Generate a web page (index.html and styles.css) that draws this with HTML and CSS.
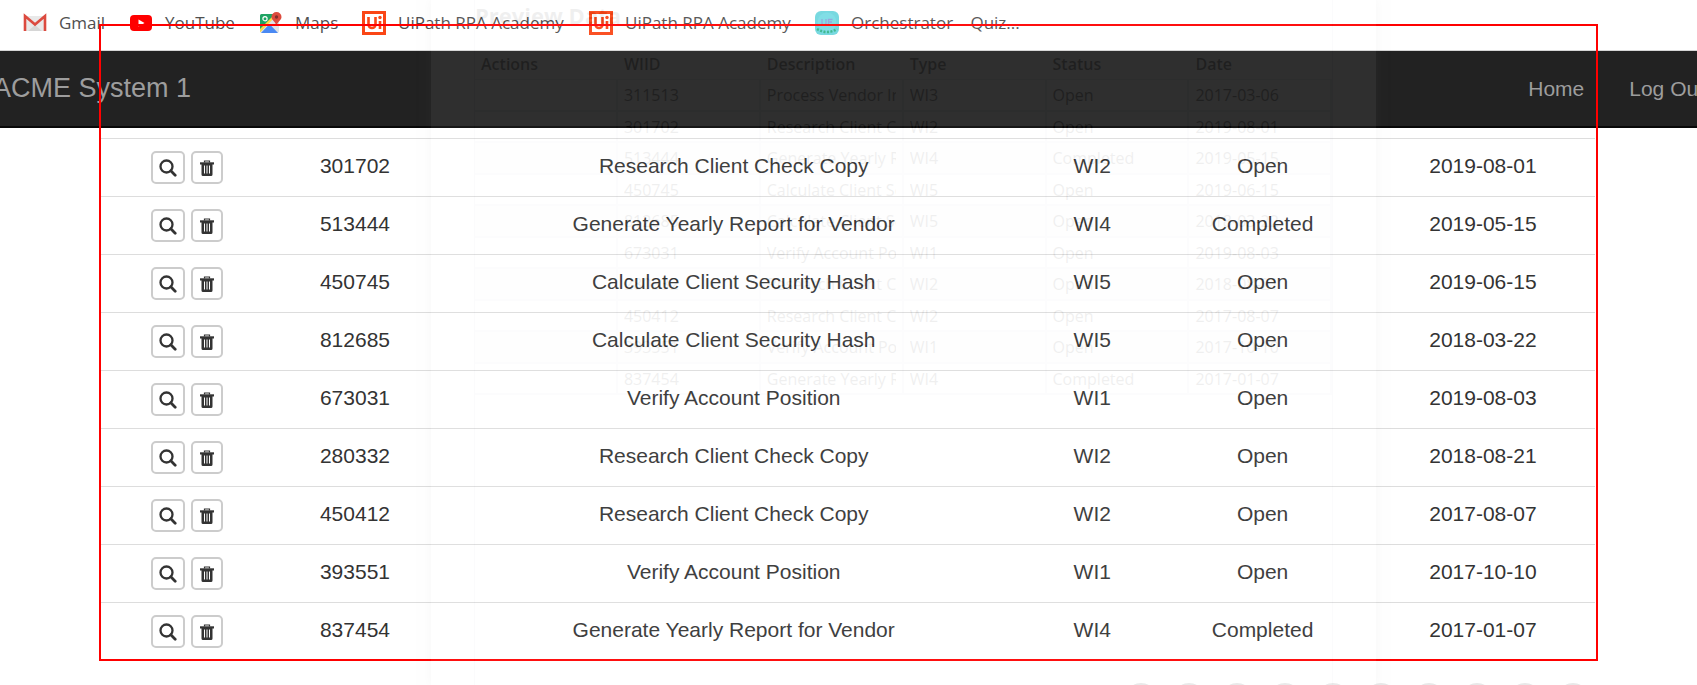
FILE: index.html
```html
<!DOCTYPE html>
<html lang="en">
<head>
<meta charset="utf-8">
<title>ACME System 1 - Work Items</title>
<link rel="stylesheet" href="styles.css">
</head>
<body>
<svg class="defs" aria-hidden="true">
  <symbol id="search" viewBox="0 0 18 18"><circle cx="7.5" cy="7.5" r="6" fill="none" stroke="currentColor" stroke-width="2.3"/><path d="M11.8 11.8 16.2 16.2" stroke="currentColor" stroke-width="2.8" stroke-linecap="round"/></symbol>
  <symbol id="trash" viewBox="0 0 14 16"><path d="M4.500 2.500V1h5v1.500" fill="none" stroke="currentColor" stroke-width="1.200"/><path d="M0 2.300h14V4.500H0z" fill="currentColor"/><path d="M1.500 4h11v10.500a1.500 1.500 0 0 1-1.500 1.500H3a1.500 1.500 0 0 1-1.500-1.500z" fill="currentColor"/><path d="M4.500 5.500v8M7 5.500v8M9.500 5.500v8" stroke="#fff" stroke-width="1"/></symbol>
  <symbol id="uipath" viewBox="0 0 24 24"><path d="M1.500 1.500h21v21h-21z" fill="#fff" stroke="#fa4616" stroke-width="3"/><path d="M6.500 6v7.500a3.500 3.500 0 0 0 7 0V6M18 10v8" fill="none" stroke="#fa4616" stroke-width="2.600"/><circle cx="18" cy="6.500" r="1.700" fill="#fa4616"/></symbol>
</svg>

<nav class="bookmarks" aria-label="Bookmarks">
  <a href="#"><svg class="mark" viewBox="0 0 24 24"><path d="M2 5h20v15H2z" fill="#e9e9e9"/><path d="M5 20l7-6 7 6z" fill="#d6d6d6"/><path d="M2 20V5l10 8.500L22 5v15" fill="none" stroke="#dc4a3f" stroke-width="2.600"/></svg>Gmail</a>
  <a href="#"><svg class="mark" viewBox="0 0 24 24"><rect x="1" y="4" width="22" height="16" rx="4" fill="#f00"/><path d="M9.500 8.500l6 3.500-6 3.500z" fill="#fff"/></svg>YouTube</a>
  <a href="#"><svg class="mark" viewBox="0 0 24 24"><rect x="1" y="3" width="19" height="19" rx="2" fill="#dfe3e6"/><path d="M1 13V4.500A1.500 1.500 0 0 1 2.500 3H17L1 19z" fill="#1fa463"/><path d="M1 18 16 3h3L1 21.500z" fill="#ffd84a"/><path d="M10.500 13 19 22H2z" fill="#4a89f3"/><circle cx="6" cy="7.700" r="2.100" fill="none" stroke="#fff" stroke-width="1.200"/><path d="M17.500 1a5 5 0 0 1 5 5c0 3.500-4.500 5-5 9-.5-4-5-5.500-5-9a5 5 0 0 1 5-5z" fill="#dd4b3e"/><circle cx="17.500" cy="6" r="1.700" fill="#822f2b"/></svg>Maps</a>
  <a href="#"><svg class="mark"><use href="#uipath"/></svg>UiPath RPA Academy</a>
  <a href="#"><svg class="mark"><use href="#uipath"/></svg>UiPath RPA Academy</a>
  <a href="#"><svg class="mark" viewBox="0 0 24 24"><rect width="24" height="24" rx="6" fill="#6fd7de"/><circle cx="12" cy="11" r="9.500" fill="#79dce5"/><path d="M2 18q10 6 20 0" fill="none" stroke="#35b58a" stroke-width="2.600" stroke-dasharray="2 1.500"/><path d="M7 8v4a2 2 0 0 0 4 0V8M17.500 8.500h-4v5.500M13.500 11h3.500" fill="none" stroke="#8fa3dc" stroke-width="1.300"/></svg>Orchestrator – Quiz...</a>
</nav>

<header class="navbar">
  <a class="brand" href="#">ACME System 1</a>
  <a class="link" href="#">Home</a>
  <a class="link last" href="#">Log Out</a>
</header>

<main class="items">
  <table class="work">
    <colgroup><col class="c-act"><col class="c-id"><col class="c-desc"><col class="c-type"><col class="c-status"><col class="c-date"></colgroup>
    <tbody id="work-rows"></tbody>
  </table>
  <div class="selection"></div>
</main>

<div class="pager"><i></i><i></i><i></i><i></i><i></i><i></i><i></i><i></i><i></i><i></i></div>

<aside class="preview">
  <div class="panel">
    <h2>Preview Data</h2>
    <table class="grid">
      <thead><tr><th>Actions</th><th>WIID</th><th>Description</th><th>Type</th><th>Status</th><th>Date</th></tr></thead>
      <tbody id="preview-rows"></tbody>
    </table>
  </div>
</aside>
<script src="rows.js"></script>
</body>
</html>
```

FILE: styles.css
```css
* { box-sizing: border-box; }
body {
  margin: 0;
  position: relative;
  height: 100vh;
  overflow: hidden;
  background: #fff;
  color: #333;
  font-family: "Liberation Sans", Arial, sans-serif;
  font-size: 21px;
}
a { color: inherit; text-decoration: none; }
.defs { position: absolute; width: 0; height: 0; }

.bookmarks {
  display: grid;
  grid-template-columns: 106px 130px 103px 227px 226px auto;
  align-items: center;
  height: 51px;
  padding: 0 0 5px 23px;
  border-bottom: 1px solid #d5d5d5;
  font-family: "Open Sans", "Noto Sans", sans-serif;
  font-size: 17px;
  color: #505050;
  white-space: nowrap;
}
.bookmarks a { display: flex; align-items: center; gap: 12px; }
.mark { width: 24px; height: 24px; flex: none; }

.navbar {
  display: flex;
  align-items: center;
  height: 77px;
  margin-right: -16px;
  background: #222;
  border-bottom: 2px solid #080808;
  color: #9d9d9d;
  white-space: nowrap;
}
.brand { margin-left: -7px; margin-right: auto; font-size: 27px; }
.link { margin-right: 45px; }
.link.last { margin-right: 9px; }

.items {
  position: relative;
  margin: 0 99px;
  padding: 10px 2px 1px;
  border-right: 1px solid #ddd;
}
.selection {
  position: absolute;
  inset: -104px -1px 0 0;
  border: 2px solid #f00;
  pointer-events: none;
}
.work { width: 100%; table-layout: fixed; border-collapse: separate; border-spacing: 0; }
.work td {
  height: 58px;
  padding: 0 0 4px;
  border-top: 1px solid #ddd;
  text-align: center;
  white-space: nowrap;
}
.c-act { width: 11.5%; }
.c-id { width: 11%; }
.c-desc { width: 39.7%; }
.c-type { width: 8.3%; }
.c-status { width: 14.5%; }
.c-date { width: 15%; }
.tools { display: flex; justify-content: center; gap: 6px; padding-top: 4px; }
.tool {
  display: grid;
  place-items: center;
  width: 34px;
  height: 33px;
  padding: 0;
  border: 2px solid #ccc;
  border-radius: 5px;
  background: #fff;
  color: #333;
}
.tool.remove { width: 32px; }
.tool svg { width: 18px; height: 18px; }
.tool.remove svg { width: 14px; height: 16px; }

.pager { display: flex; justify-content: flex-end; gap: 16px; padding: 22px 108px 0 0; }
.pager i { width: 32px; height: 32px; border-radius: 50%; background: #e8e8e8; }

.preview {
  position: absolute;
  top: 0;
  bottom: 0;
  left: 25.4%;
  right: 18.9%;
  padding: 0 43px;
  background: #fff;
  color: #000;
  opacity: 0.06;
  box-shadow: 0 0 10px #777;
  font-family: "Open Sans", "Noto Sans", sans-serif;
  font-size: 16px;
  pointer-events: none;
}
.panel { height: 100%; border: solid #ccd; border-width: 0 1px; }
.preview h2 { margin: 0; height: 51px; font-size: 22px; line-height: 30px; }
.grid { width: 100%; table-layout: fixed; border-collapse: separate; border-spacing: 0; }
.grid th, .grid td {
  height: 31px;
  padding: 0 6px;
  white-space: nowrap;
  text-align: left;
  line-height: 24px;
  border-bottom: 2px solid #cfd6e0;
}
.grid th { height: 29px; padding-bottom: 3px; border-bottom-width: 1px; font-weight: 600; }
.grid td { border-right: 2px solid #cfd6e0; }
.grid td div { overflow: hidden; }
.grid tbody tr:nth-child(odd) td { height: 32px; background: #f4f4f4; }
```

FILE: rows.js
```js
const items = [
  ["311513", "Process Vendor Invoice", "WI3", "Open", "2017-03-06"],
  ["301702", "Research Client Check Copy", "WI2", "Open", "2019-08-01"],
  ["513444", "Generate Yearly Report for Vendor", "WI4", "Completed", "2019-05-15"],
  ["450745", "Calculate Client Security Hash", "WI5", "Open", "2019-06-15"],
  ["812685", "Calculate Client Security Hash", "WI5", "Open", "2018-03-22"],
  ["673031", "Verify Account Position", "WI1", "Open", "2019-08-03"],
  ["280332", "Research Client Check Copy", "WI2", "Open", "2018-08-21"],
  ["450412", "Research Client Check Copy", "WI2", "Open", "2017-08-07"],
  ["393551", "Verify Account Position", "WI1", "Open", "2017-10-10"],
  ["837454", "Generate Yearly Report for Vendor", "WI4", "Completed", "2017-01-07"]
];
const cells = row => row.map(v => `<td><div>${v}</div></td>`).join("");
const tools = `<td><div class="tools">
  <button class="tool" aria-label="View"><svg><use href="#search"/></svg></button>
  <button class="tool remove" aria-label="Delete"><svg><use href="#trash"/></svg></button>
</div></td>`;
document.getElementById("work-rows").innerHTML =
  items.slice(1).map(r => `<tr>${tools}${cells(r)}</tr>`).join("");
document.getElementById("preview-rows").innerHTML =
  items.map(r => `<tr><td></td>${cells(r)}</tr>`).join("");
```
